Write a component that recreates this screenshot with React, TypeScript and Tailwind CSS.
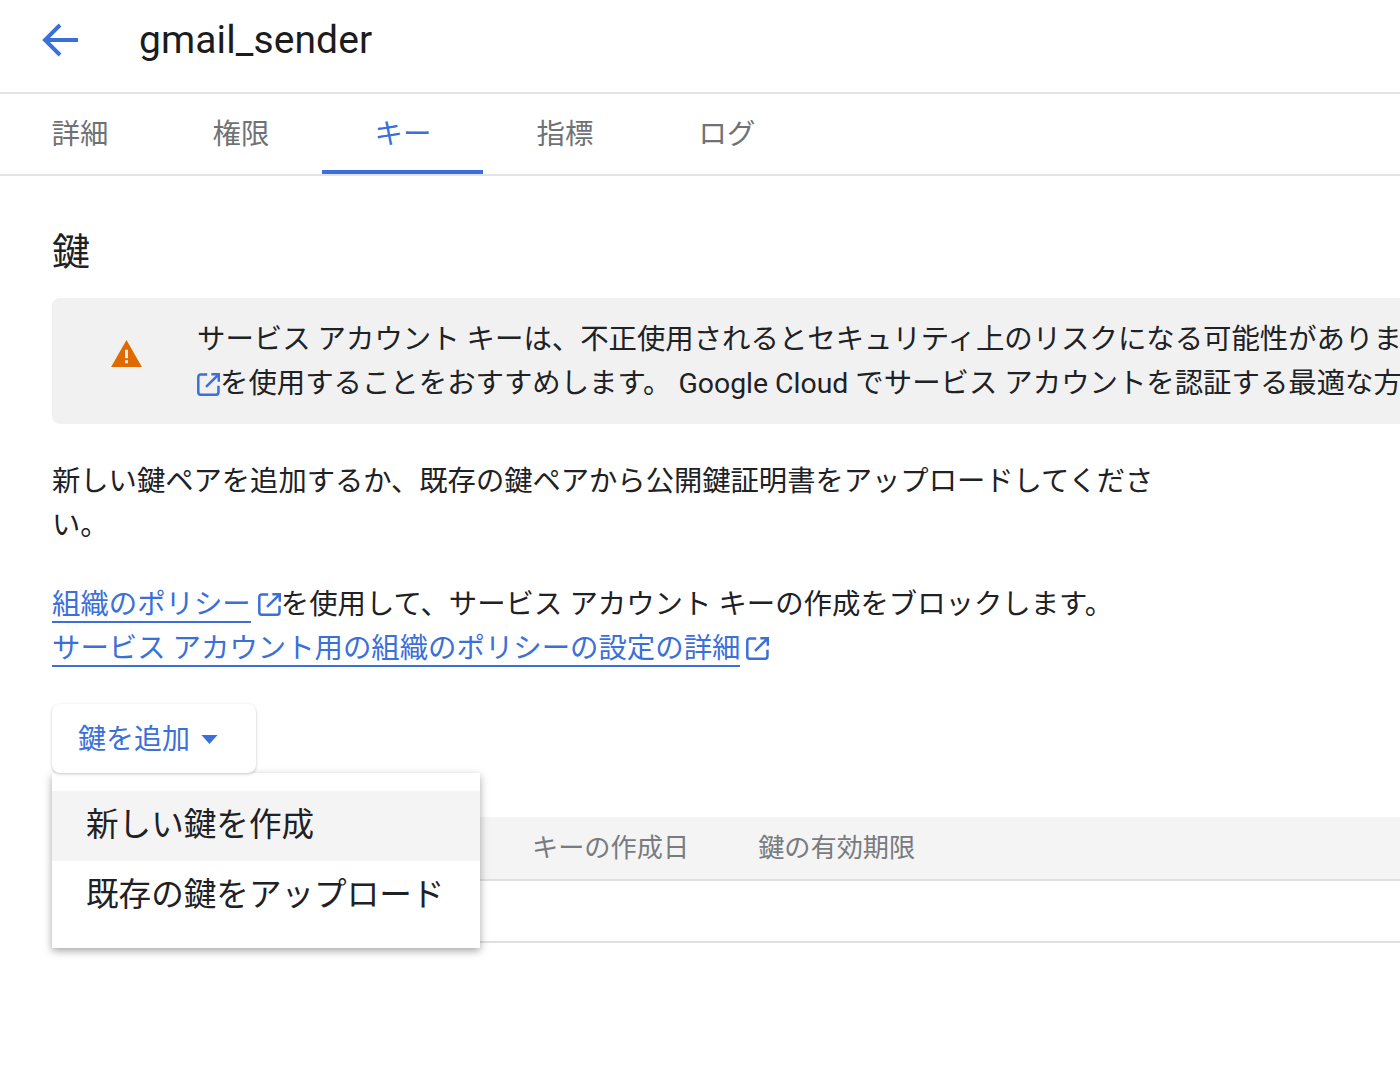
const FONT = "font-['Roboto','Noto_Sans_CJK_JP',sans-serif]";

function ExternalIcon({ className }: { className?: string }) {
  return (
    <svg viewBox="2.4 2.2 19.4 19.4" className={className} fill="none" stroke="#3b6fd9" strokeWidth="2.1">
      <path d="M11 3.5H5.5a2 2 0 0 0-2 2v13a2 2 0 0 0 2 2h13a2 2 0 0 0 2-2V13" />
      <path d="M14.5 3.2h6.3v6.3M20.5 3.5 10 14" />
    </svg>
  );
}

const tabs = ["詳細", "権限", "キー", "指標", "ログ"];

export default function App() {
  return (
    <div className={`${FONT} relative w-[1400px] h-[1084px] overflow-hidden bg-white text-[#202124]`}>
      <header className="h-[92px] flex items-center pb-[13px]">
        <svg viewBox="0 0 36 36" className="ml-[42px] w-[36px] h-[36px] shrink-0" fill="none" stroke="#3b6fd9" strokeWidth="3.9">
          <path d="M36 18H3M18 3 3 18l15 15" />
        </svg>
        <h1 className="ml-[61px] pt-[2px] text-[39px] leading-none tracking-[0.1px] text-[#1c1c1e]">gmail_sender</h1>
      </header>
      <nav className="flex h-[84px] border-y-2 border-[#e2e3e4]">
        {tabs.map((t, i) => (
          <div
            key={t}
            className={`relative ${i === 0 ? "w-[160px]" : "w-[162px]"} flex items-center justify-center text-[28.4px] pt-[3px] ${
              i === 2 ? "text-[#3b6fd9]" : "text-[#6f7275]"
            }`}
          >
            {t}
            {i === 2 && <span className="absolute left-0 right-[1px] bottom-0 h-[4px] bg-[#3b6fd9]" />}
          </div>
        ))}
      </nav>
      <main className="pl-[52px]">
        <h2 className="mt-[51px] text-[38px] leading-[50px] text-[#202124]">鍵</h2>
        <div className="mt-[21px] h-[126px] w-[1400px] rounded-l-[8px] bg-[#f1f1f2] flex items-center">
          <svg viewBox="0 0 32 28" className="self-start mt-[42px] ml-[59px] w-[31px] h-[27px] shrink-0" fill="#df6b00">
            <path fillRule="evenodd" d="M16 0 32 28H0ZM14.5 10v9h3v-9Zm0 11v3h3v-3Z" />
          </svg>
          <div className="ml-[55px] text-[28.4px] leading-[44px] whitespace-nowrap pt-[2px]">
            <p>サービス アカウント キーは、不正使用されるとセキュリティ上のリスクになる可能性があります。</p>
            <p className="flex items-center">
              <ExternalIcon className="w-[23px] h-[23px] shrink-0" />
              <span>を使用することをおすすめします。</span>
              <span className="ml-[7px]">Google Cloud でサービス アカウントを認証する最適な方法</span>
            </p>
          </div>
        </div>
        <p className="mt-[36px] w-[1110px] text-[28.3px] leading-[44px]">
          新しい鍵ペアを追加するか、既存の鍵ペアから公開鍵証明書をアップロードしてくださ<br />い。
        </p>
        <div className="mt-[35px] text-[28.4px] leading-[44px] whitespace-nowrap">
          <p className="flex items-start h-[44px]">
            <span className="block h-[40px] text-[#3b6fd9] border-b-2 border-[#3b6fd9]">組織のポリシー</span>
            <ExternalIcon className="w-[23px] h-[23px] ml-[7px] mt-[10px] shrink-0" />
            <span>を使用して、サービス アカウント キーの作成をブロックします。</span>
          </p>
          <p className="flex items-start h-[44px]">
            <span className="block h-[40px] text-[#3b6fd9] border-b-2 border-[#3b6fd9]">サービス アカウント用の組織のポリシーの設定の詳細</span>
            <ExternalIcon className="w-[23px] h-[23px] ml-[6px] mt-[10px] shrink-0" />
          </p>
        </div>
        <div className="relative mt-[33px]">
          <button className="relative z-20 w-[204px] h-[69px] flex items-center pl-[26px] pt-[2px] rounded-[8px] bg-white shadow-[0_1px_3px_rgba(60,64,67,0.3)] text-[#3b6fd9] text-[28px]">
            鍵を追加
            <svg viewBox="0 0 18 10" className="ml-[11px] w-[17px] h-[9px]" fill="#3b6fd9">
              <path d="M0 0h18L9 10Z" />
            </svg>
          </button>
          <div className="absolute z-10 left-0 top-[69px] w-[428px] h-[175px] pt-[18px] bg-white shadow-[0_3px_8px_rgba(0,0,0,0.35)] text-[32.6px] text-[#202124]">
            <div className="h-[70px] pl-[34px] flex items-center bg-[#f4f4f4] pb-[2px]">新しい鍵を作成</div>
            <div className="h-[70px] pl-[34px] flex items-center whitespace-nowrap pb-[2px]">既存の鍵をアップロード</div>
          </div>
          <div className="mt-[44px] w-[1348px]">
            <div className="h-[64px] flex items-center pt-[2px] bg-[#f4f4f4] border-b-2 border-[#dfe0e1] text-[26.2px] text-[#787b7f]">
              <span className="ml-[480px]">キーの作成日</span>
              <span className="ml-[69px]">鍵の有効期限</span>
            </div>
            <div className="h-[62px] border-b-2 border-[#dfe0e1]" />
          </div>
        </div>
      </main>
    </div>
  );
}
